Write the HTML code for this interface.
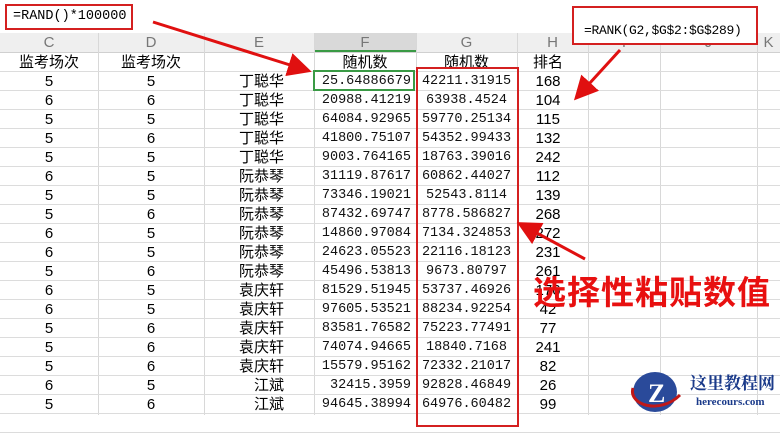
<!DOCTYPE html>
<html><head><meta charset="utf-8"><style>
body{margin:0;width:780px;height:415px;overflow:hidden;background:#fff;position:relative;font-family:"Liberation Sans","Noto Sans CJK SC",sans-serif}
.fb{position:absolute;left:0;top:0;width:780px;height:33px;background:#fff;border-bottom:1px solid #d4d4d4}
.hdr{position:absolute;left:0;top:33px;width:780px;height:19px;background:#efefef;border-bottom:1px solid #d0d0d0}
.c{position:absolute;text-align:center;font-size:15px;line-height:19px;color:#000;white-space:nowrap;overflow:hidden}
.h{color:#777;font-size:15px}
.m{font-family:"Liberation Mono","Noto Sans CJK SC",monospace;font-size:13.5px;color:#111}
.vl{position:absolute;top:33px;width:1px;height:382px;background:#d8d8d8}
.hl{position:absolute;left:0;width:780px;height:1px;background:#dcdcdc}
</style></head><body>
<div class="fb"></div>
<div class="hdr"></div>
<div style="position:absolute;left:314px;top:33px;width:102px;height:19px;background:#d9d9d9;border-bottom:2px solid #3a9a45;box-sizing:border-box"></div>
<div id="g"></div>
<script>
var cols=[0,98,204,314,416,517,588,660,757,780];
var names=["C","D","E","F","G","H","I","J","K"];
var h='';
for(var i=1;i<cols.length-1;i++)h+='<div class="vl" style="left:'+cols[i]+'px"></div>';
for(var y=52;y<415;y+=19)h+='<div class="hl" style="top:'+(y+19)+'px"></div>';
for(var i=0;i<9;i++)h+='<div class="c h" style="left:'+cols[i]+'px;width:'+(cols[i+1]-cols[i])+'px;top:33px">'+names[i]+'</div>';
var rows=[["监考场次","监考场次","","随机数","随机数","排名"],
["5","5","丁聪华","25.64886679","42211.31915","168"],
["6","6","丁聪华","20988.41219","63938.4524","104"],
["5","5","丁聪华","64084.92965","59770.25134","115"],
["5","6","丁聪华","41800.75107","54352.99433","132"],
["5","5","丁聪华","9003.764165","18763.39016","242"],
["6","5","阮恭琴","31119.87617","60862.44027","112"],
["5","5","阮恭琴","73346.19021","52543.8114","139"],
["5","6","阮恭琴","87432.69747","8778.586827","268"],
["6","5","阮恭琴","14860.97084","7134.324853","272"],
["6","5","阮恭琴","24623.05523","22116.18123","231"],
["5","6","阮恭琴","45496.53813","9673.80797","261"],
["6","5","袁庆轩","81529.51945","53737.46926","176"],
["6","5","袁庆轩","97605.53521","88234.92254","42"],
["5","6","袁庆轩","83581.76582","75223.77491","77"],
["5","6","袁庆轩","74074.94665","18840.7168","241"],
["5","6","袁庆轩","15579.95162","72332.21017","82"],
["6","5","江斌","32415.3959","92828.46849","26"],
["5","6","江斌","94645.38994","64976.60482","99"]];
for(var r=0;r<rows.length;r++){var t=52+r*19+1;
for(var k=0;k<6;k++){var cls='c'+((k==3||k==4)&&r>0?' m':'');var l=cols[k],w=cols[k+1]-cols[k];
var st='';if(k==2&&r>0){st='text-align:right;padding-right:30px;box-sizing:border-box;';}
if(k==3&&r>0){st='text-align:right;padding-right:5px;box-sizing:border-box;';}
if(k==5){l=517;w=70;st='text-align:center;padding-right:8px;box-sizing:border-box;';}
h+='<div class="'+cls+'" style="'+st+'left:'+l+'px;width:'+w+'px;top:'+t+'px">'+rows[r][k]+'</div>';}}
document.getElementById('g').innerHTML=h;
</script>
<div style="position:absolute;left:313px;top:70px;width:102px;height:21px;border:2px solid #3a9a45;box-sizing:border-box"></div>
<div style="position:absolute;left:416px;top:67px;width:103px;height:360px;border:2px solid #d42020;box-sizing:border-box"></div>
<div style="position:absolute;left:5px;top:4px;width:128px;height:26px;border:2px solid #d42020;box-sizing:border-box;background:#fff;font-family:'Liberation Mono',monospace;font-size:13.5px;line-height:22px;padding-left:6px">=RAND()*100000</div>
<div style="position:absolute;left:572px;top:6px;width:186px;height:39px;border:2px solid #d42020;box-sizing:border-box;background:#fff;font-family:'Liberation Mono',monospace;font-size:13px;line-height:18px;padding:14px 0 0 10px;white-space:nowrap;letter-spacing:-0.3px">=RANK(G2,$G$2:$G$289)</div>
<svg style="position:absolute;left:0;top:0" width="780" height="415">
<defs><marker id="a" markerWidth="8" markerHeight="8" refX="6" refY="4" orient="auto"><path d="M0,0 L8,4 L0,8 Z" fill="#e01010"/></marker></defs>
<line x1="153" y1="22" x2="306" y2="70" stroke="#e01010" stroke-width="3" marker-end="url(#a)"/>
<line x1="620" y1="50" x2="578" y2="96" stroke="#e01010" stroke-width="3" marker-end="url(#a)"/>
<line x1="585" y1="259" x2="522" y2="225" stroke="#e01010" stroke-width="3" marker-end="url(#a)"/>
<ellipse cx="655" cy="392" rx="22" ry="20" fill="#2a4a9a"/>
<path d="M633,388 C628,405 660,415 680,395" stroke="#c01818" stroke-width="3" fill="none"/>
<text x="648" y="402" font-family="Liberation Serif" font-size="26" font-weight="bold" fill="#fff">Z</text>
</svg>
<div style="position:absolute;left:533px;top:270px;color:#e81010;font-family:'Noto Sans CJK SC',sans-serif;font-weight:bold;font-size:33px;line-height:40px;white-space:nowrap;letter-spacing:1px">选择性粘贴数值</div>
<div style="position:absolute;left:690px;top:372px;color:#1a3a8a;font-family:'Noto Serif CJK SC',serif;font-weight:bold;font-size:17px;line-height:20px;white-space:nowrap">这里教程网</div>
<div style="position:absolute;left:696px;top:396px;color:#1a3a8a;font-family:'Liberation Serif',serif;font-weight:bold;font-size:11px;white-space:nowrap">herecours.com</div>
</body></html>
